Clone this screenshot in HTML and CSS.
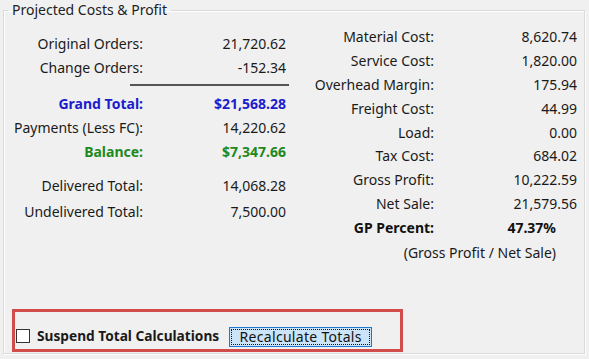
FILE: index.html
```html
<!DOCTYPE html>
<html>
<head>
<meta charset="utf-8">
<link rel="stylesheet" href="styles.css">
</head>
<body>
<fieldset class="group">
  <legend class="legend">Projected Costs &amp; Profit</legend>
  <div class="cols">
    <div class="left">
      <div class="row"><span class="lbl">Original Orders:</span><span class="val">21,720.62</span></div>
      <div class="row"><span class="lbl">Change Orders:</span><span class="val">-152.34</span></div>
      <div class="rule"></div>
      <div class="row blue"><span class="lbl">Grand Total:</span><span class="val">$21,568.28</span></div>
      <div class="row"><span class="lbl">Payments (Less FC):</span><span class="val">14,220.62</span></div>
      <div class="row green"><span class="lbl">Balance:</span><span class="val">$7,347.66</span></div>
      <div class="row gap"><span class="lbl">Delivered Total:</span><span class="val">14,068.28</span></div>
      <div class="row tall"><span class="lbl">Undelivered Total:</span><span class="val">7,500.00</span></div>
    </div>
    <div class="right">
      <div class="row"><span class="lbl">Material Cost:</span><span class="val">8,620.74</span></div>
      <div class="row"><span class="lbl">Service Cost:</span><span class="val">1,820.00</span></div>
      <div class="row"><span class="lbl">Overhead Margin:</span><span class="val">175.94</span></div>
      <div class="row"><span class="lbl">Freight Cost:</span><span class="val">44.99</span></div>
      <div class="row"><span class="lbl">Load:</span><span class="val">0.00</span></div>
      <div class="row"><span class="lbl">Tax Cost:</span><span class="val">684.02</span></div>
      <div class="row"><span class="lbl">Gross Profit:</span><span class="val">10,222.59</span></div>
      <div class="row"><span class="lbl">Net Sale:</span><span class="val">21,579.56</span></div>
      <div class="row bold"><span class="lbl">GP Percent:</span><span class="val pct">47.37%</span></div>
      <div class="row note"><span class="formula">(Gross Profit / Net Sale)</span></div>
    </div>
  </div>
  <div class="footer">
    <label class="suspend"><span class="box"></span><span class="suspend-text">Suspend Total Calculations</span></label>
    <button class="recalc"><span class="focus">Recalculate Totals</span></button>
  </div>
</fieldset>
</body>
</html>
```
FILE: styles.css
```css
html, body {
  margin: 0;
  padding: 0;
  background: #f0f0f0;
  font-family: "Noto Sans", "Open Sans", sans-serif;
  font-size: 14px;
  color: #1a1a1a;
}
body {
  width: 589px;
  height: 359px;
  overflow: hidden;
}
.group {
  margin: 2px 0 0 3px;
  width: 582px;
  height: 352px;
  box-sizing: border-box;
  border: 1px solid #d9d9d9;
  box-shadow: inset 1px 1px 0 #ffffff, 1px 1px 0 #ffffff;
  padding: 0;
}
.legend {
  margin-left: 4px;
  padding: 0 4px;
  font-size: 14px;
  line-height: 16px;
  color: #222;
}
.cols {
  display: flex;
  height: 270px;
}
.left {
  width: 286px;
  padding-top: 13px;
  box-sizing: border-box;
}
.right {
  width: 292px;
  padding-top: 7px;
  box-sizing: border-box;
}
.row {
  display: flex;
  align-items: center;
  height: 24px;
  white-space: nowrap;
}
.right .row {
  height: 23.8px;
}
.left .lbl {
  width: 139px;
  text-align: right;
}
.left .val {
  width: 143px;
  text-align: right;
}
.right .lbl {
  width: 144px;
  text-align: right;
}
.right .val {
  width: 143px;
  text-align: right;
}
.right .val.pct {
  width: 122px;
}
.rule {
  margin: 5px 0 5px 126px;
  width: 159px;
  height: 2px;
  background: #555;
}
.blue { color: #1c1ccf; font-weight: bold; }
.green { color: #1e8a1e; font-weight: bold; }
.bold { font-weight: bold; color: #111; }
.gap { margin-top: 10px; }
.left .tall { height: 28px; }
.right .note { justify-content: flex-end; padding-right: 26px; height: 26px; }
.footer {
  margin: 21px 0 0 8px;
  width: 384px;
  height: 37px;
  border: 3px solid #d24c4c;
  display: flex;
  align-items: flex-end;
  padding: 0 0 0 1px;
  box-sizing: content-box;
}
.suspend {
  display: flex;
  align-items: center;
  gap: 7px;
  margin-right: 10px;
  margin-bottom: 4px;
}
.box {
  width: 12px;
  height: 12px;
  border: 1px solid #333;
  background: #fff;
}
.suspend-text {
  font-weight: bold;
  font-size: 13.7px;
}
.recalc {
  font-family: inherit;
  font-size: 14px;
  letter-spacing: 0.3px;
  color: #111;
  background: #cce4f7;
  border: 1px solid #1e78d2;
  padding: 1px;
  margin: 0 0 2px 0;
  height: 20px;
  width: 143px;
  display: flex;
}
.focus {
  flex: 1;
  border: 1px dotted #111;
  line-height: 14px;
  text-align: center;
  white-space: nowrap;
}
```
